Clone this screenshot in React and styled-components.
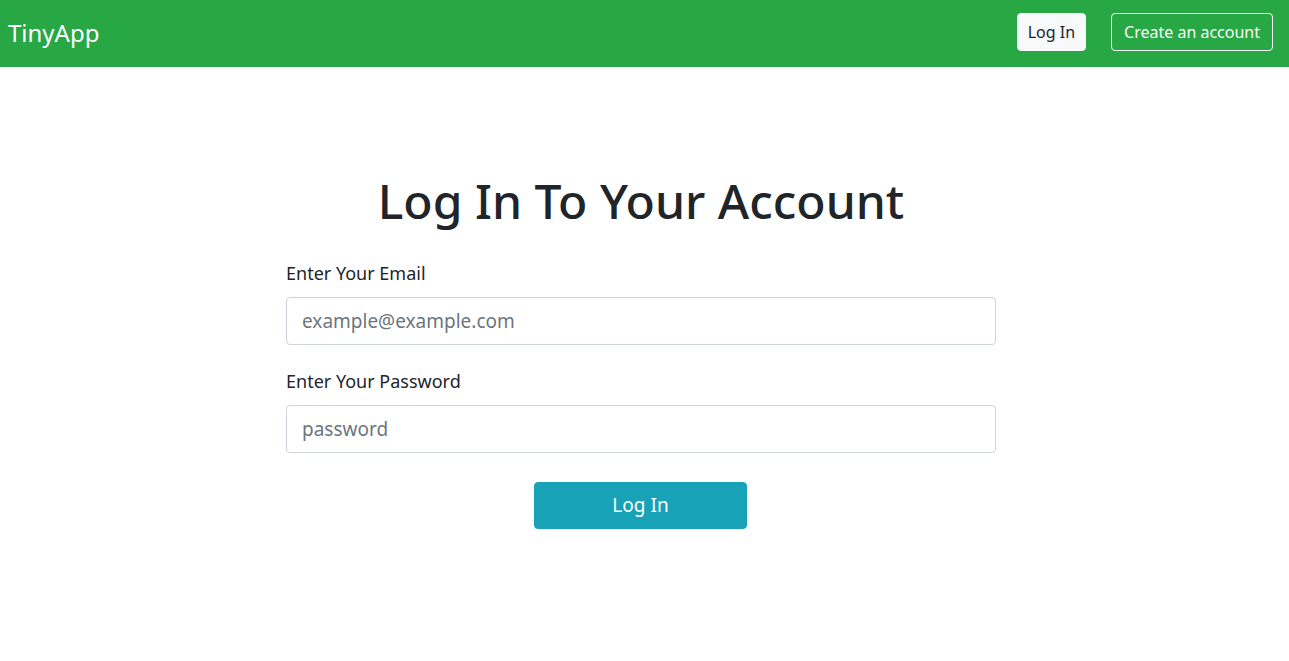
import React from "react";
import styled, { createGlobalStyle } from "styled-components";

const Global = createGlobalStyle`
  body {
    margin: 0;
    font-family: "Noto Sans", "Open Sans", sans-serif;
    color: #212529;
    background: #fff;
  }
  * { box-sizing: border-box; }
`;

const Nav = styled.nav`
  height: 67px;
  background: #28a745;
  display: flex;
  align-items: center;
  justify-content: space-between;
  padding: 0 16px 3px 8px;
`;

const Brand = styled.a`
  color: #fff;
  font-size: 24px;
  text-decoration: none;
`;

const NavActions = styled.div`
  display: flex;
  align-items: center;
  gap: 25px;
`;

const NavButton = styled.button`
  height: 38px;
  padding: 0 ${(p) => (p.$outline ? "12px" : "10px")};
  font-family: inherit;
  font-size: 16px;
  border-radius: 4px;
  border: 1px solid #f8f9fa;
  background: ${(p) => (p.$outline ? "transparent" : "#f8f9fa")};
  color: ${(p) => (p.$outline ? "#f8f9fa" : "#212529")};
`;

const Main = styled.main`
  display: flex;
  flex-direction: column;
  align-items: center;
  padding: 105px 7px 0 0;
`;

const Title = styled.h1`
  margin: 0 0 30px;
  font-size: 48px;
  font-weight: 500;
  line-height: 1.2;
  color: #212529;
`;

const Form = styled.form`
  width: 710px;
  display: flex;
  flex-direction: column;
`;

const Field = styled.div`
  display: flex;
  flex-direction: column;
  margin-bottom: 23px;
`;

const Label = styled.label`
  font-size: 18px;
  line-height: 1.5;
  margin-bottom: 10px;
  color: #212529;
`;

const Input = styled.input`
  height: 48px;
  padding: 0 15px;
  font-family: inherit;
  font-size: 19px;
  border: 1px solid #ced4da;
  border-radius: 4px;
  color: #495057;
  &::placeholder { color: #6c757d; }
`;

const Submit = styled.button`
  align-self: flex-start;
  width: 213px;
  height: 47px;
  margin: 6px 0 0 248px;
  border: 1px solid #17a2b8;
  border-radius: 4px;
  background: #17a2b8;
  color: #fff;
  font-family: inherit;
  font-size: 19px;
`;

export default function App() {
  return (
    <>
      <Global />
      <Nav>
        <Brand href="#">TinyApp</Brand>
        <NavActions>
          <NavButton type="button">Log In</NavButton>
          <NavButton type="button" $outline>Create an account</NavButton>
        </NavActions>
      </Nav>
      <Main>
        <Title>Log In To Your Account</Title>
        <Form onSubmit={(e) => e.preventDefault()}>
          <Field>
            <Label htmlFor="email">Enter Your Email</Label>
            <Input id="email" type="email" placeholder="example@example.com" />
          </Field>
          <Field>
            <Label htmlFor="password">Enter Your Password</Label>
            <Input id="password" type="password" placeholder="password" />
          </Field>
          <Submit type="submit">Log In</Submit>
        </Form>
      </Main>
    </>
  );
}
